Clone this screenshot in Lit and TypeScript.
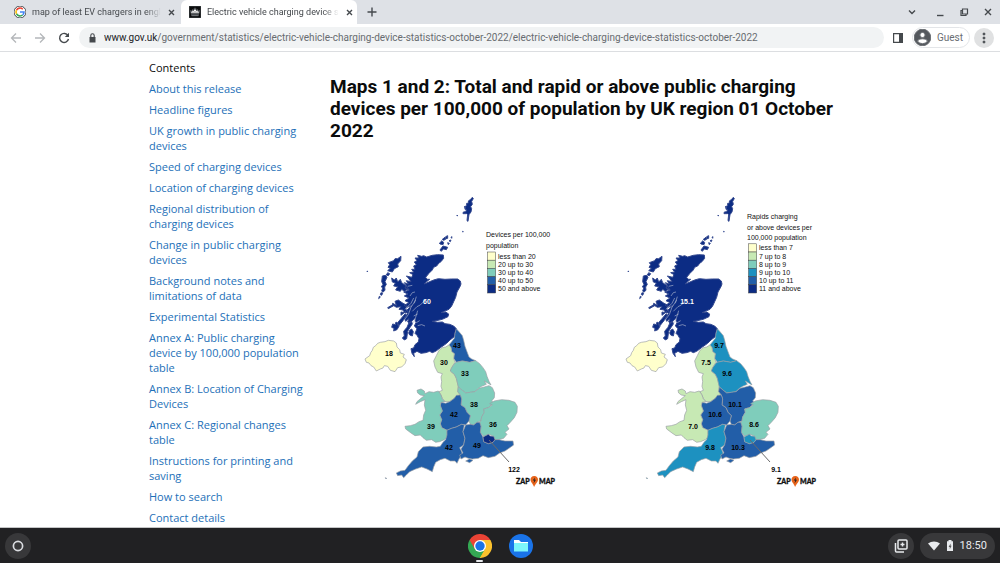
import { LitElement, html, svg, css } from "lit";
import { customElement, property } from "lit/decorators.js";

const COLORS = {
  cream: "#ffffcc",
  lime: "#c7e9b4",
  teal: "#7fcdbb",
  sky: "#1d91c0",
  blue: "#225ea8",
  navy: "#0c2c84",
};

type ColorName = keyof typeof COLORS;

interface MapData {
  title: string[];
  titleY: number;
  legend: [ColorName, string][];
  regions: Record<string, [ColorName, string, number, number]>;
}

// outlines, drawn on a grid three times as fine as the map
const SHAPES: Record<string, string> = {
  ni: "M30 507L44 497 47 488 52 481 55 472 62 467 68 460 76 457 90 455 100 451 116 453 124 459 126 471 134 479 136 489 148 493 144 501 154 509 150 521 140 531 128 533 120 545 106 541 98 529 88 527 84 534 76 537 64 543 56 531 48 527 42 519 34 517Z",
  ne: "M304 416L312 425 322 437 326 451 330 469 336 485 342 501 350 507 362 512 344 517 322 513 304 517 296 505 298 491 290 485 288 473 282 465 290 455 298 445 300 430Z",
  nw: "M282 465L288 473 290 485 298 491 296 505 300 517 290 533 286 543 298 553 304 565 310 589 308 605 316 615 298 625 284 635 270 635 262 625 258 615 252 605 262 601 258 589 260 575 258 561 262 551 248 547 240 531 236 513 244 497 252 481 262 473 272 471Z",
  yh: "M304 517L322 513 344 517 362 512 374 521 384 533 392 545 396 559 402 574 408 585 398 579 388 573 394 583 380 589 370 595 360 605 346 607 332 609 322 601 310 591 304 565 298 553 286 543 290 533 300 519Z",
  em: "M310 591L322 601 332 609 346 607 360 605 372 595 388 591 402 587 412 593 419 609 418 623 410 633 416 638 400 653 386 657 388 667 380 681 378 693 366 697 356 705 346 703 342 693 346 677 336 667 330 653 318 645 320 627 316 615 308 605Z",
  wm: "M316 615L320 627 318 645 330 653 336 667 346 677 342 693 332 705 320 703 304 711 290 715 276 721 260 713 256 701 260 689 254 675 262 663 256 647 258 637 272 640 284 635 298 625 304 616Z",
  ee: "M386 657L400 653 412 645 404 641 418 633 440 629 462 631 480 637 487 649 486 667 478 683 466 697 456 707 462 717 450 727 456 733 446 745 430 749 420 749 416 739 402 733 386 739 376 727 378 709 374 697 378 693 380 681 388 667Z",
  se: "M332 705L346 703 356 705 366 697 374 697 378 709 376 727 384 741 386 755 400 761 414 757 420 749 432 749 450 753 474 753 476 765 462 775 450 783 434 789 420 799 400 803 384 797 370 805 352 807 340 805 330 801 318 807 314 795 324 789 318 777 326 765 330 745 324 725ZM332 813L344 807 354 811 344 818Z",
  lon: "M384 741L392 737 400 733 406 738 416 739 420 749 414 757 400 761 386 755Z",
  sw: "M276 721L290 715 304 711 320 703 328 705 324 725 330 745 326 765 314 773 320 785 322 793 312 807 306 820 300 813 286 813 270 805 256 809 242 817 236 831 232 845 216 837 200 831 182 837 164 845 154 855 146 863 140 855 128 857 124 849 136 843 150 841 160 827 172 813 186 801 190 785 204 771 224 769 244 771 256 769 264 757 272 749 276 735ZM91 863l4 2-2 2z",
  wal: "M186 601L198 597 208 603 210 611 222 605 236 607 250 603 258 615 262 627 270 635 258 637 256 647 262 663 254 675 260 689 256 701 260 713 276 721 276 741 268 749 254 755 242 757 230 749 214 751 204 743 196 735 180 737 168 729 152 717 150 709 166 707 180 703 192 695 204 691 206 675 212 661 208 645 210 629 196 635 182 643 186 635 198 625 208 617 196 615 188 609Z",
  sco: `M188 196L200 199 206 197 215 201 232 196 248 194 265 195 266 205 258 215 252 219 245 228 236 232 232 240 222 250 212 262 217 268 224 268 216 274 208 282 222 276 236 270 250 266 270 268 290 267 308 267 316 273 318 282 315 290 306 306 302 322 296 335 290 348 282 358 268 364 258 368 272 366 281 372 279 380 262 388 240 393 232 394 248 397 262 396 270 401 284 403 296 408 304 416 300 428 298 440 285 450 275 460 258 472 242 484 232 488 224 484 212 488 198 490 186 484 176 490 178 500 171 490 168 476 176 474 180 464 190 456 192 446 186 436 180 430 186 416 178 408 183 398 180 385 172 392 165 400 158 396 162 386 152 394 148 384 158 370 150 366 160 356 172 346 156 352 148 346 162 338 150 332 162 324 148 318 158 312 146 306 163 300 150 294 154 286 148 278 160 282 154 272 168 275 160 264 154 258 170 262 174 254 164 248 176 246 170 238 180 238 176 228 184 224 178 216 186 212 180 204 192 204Z
    M110 264L118 270 124 264 128 276 136 268 140 278 150 285 160 296 148 304 140 298 136 304 122 300 128 290 116 288 121 279 112 276Z
    M138 199L137 212 128 222 130 230 118 236 112 246 98 242 106 235 99 232 104 224 100 218 116 212 120 206 128 206Z
    M98 248l6 3-4 6-6-2zM82 258l10-2 4 6-6 13 4 8-5 8 1 10-7 6-3-5 4-9-5-2 5-8-4-8zM78 308l5 2-3 6-4-2zM73 319l3 2-5 5z
    M113 340L124 346 120 334 130 330 144 340 156 346 152 358 160 364 150 370 144 360 132 358 138 350 124 352 112 344Z
    M98 353l14-8 6 1-18 10zM113 402l8 2 2-8 7 5 2 8-6 10-10 4 1-8-7-3zM128 398l10-12 12-14 4 4-10 16-12 15-5-2z
    M142 444L148 438 146 424 156 412 162 398 170 394 172 402 164 414 158 424 155 446 148 450ZM164 421l6-4 5 8-3 13-8-3-3-6z
    M138 366l10 2-10 8z
    M253 160l8-8 5 6-2 6-9-2zM262 148l8-6 2 6-6 3zM272 140l6-3 0 8-5 1zM282 152l6-2-2 5zM264 168l14 4-4 7-8-2-8 7-3-4zM278 158l5 2-3 4zM288 142l3-2-1 5z
    M352 22l3 4-5 8 2 9-5 7 3 6-2 10-6 8-3 20-3-2 2-18-3-3-11 0 1-5 8-1 1-6-5-2 3-4-5-2 8-4 0-7 6-1-1-6 7-5z
    M306 75l2 2-2 1zM323 124l2 1-2 1zM36 243l2 1-1 2z`,
};

const LOCHS =
  "M208 333L196 345 186 350 172 364M182 330L168 352 160 374 148 390M184 320L178 340M165 318L172 308 180 306M158 289L172 286M150 358L168 340 176 324M188 362L182 382 176 398M176 378L188 372M184 398L194 392M188 407L200 404 210 408";

const DEVICES: MapData = {
  title: ["Devices per 100,000", "population"],
  titleY: 47,
  legend: [
    ["cream", "less than 20"],
    ["lime", "20 up to 30"],
    ["teal", "30 up to 40"],
    ["blue", "40 up to 50"],
    ["navy", "50 and above"],
  ],
  regions: {
    sco: ["navy", "60", 72, 114],
    ni: ["cream", "18", 34, 166],
    ne: ["blue", "43", 102, 158],
    nw: ["lime", "30", 89, 175],
    yh: ["teal", "33", 110, 186],
    em: ["teal", "38", 119, 217],
    wm: ["blue", "42", 99, 227],
    ee: ["teal", "36", 138, 237],
    wal: ["teal", "39", 76, 239],
    sw: ["blue", "42", 94, 260],
    se: ["blue", "49", 122, 258],
    lon: ["navy", "122", 159, 282],
  },
};

const RAPIDS: MapData = {
  title: ["Rapids charging", "or above devices per", "100,000 population"],
  titleY: 29,
  legend: [
    ["cream", "less than 7"],
    ["lime", "7 up to 8"],
    ["teal", "8 up to 9"],
    ["sky", "9 up to 10"],
    ["blue", "10 up to 11"],
    ["navy", "11 and above"],
  ],
  regions: {
    sco: ["navy", "15.1", 71, 114],
    ni: ["cream", "1.2", 35, 166],
    ne: ["sky", "9.7", 103, 158],
    nw: ["lime", "7.5", 90, 175],
    yh: ["sky", "9.6", 111, 186],
    em: ["blue", "10.1", 119, 217],
    wm: ["blue", "10.6", 99, 227],
    ee: ["teal", "8.6", 138, 237],
    wal: ["lime", "7.0", 77, 239],
    sw: ["sky", "9.8", 94, 260],
    se: ["blue", "10.3", 122, 260],
    lon: ["sky", "9.1", 160, 282],
  },
};

@customElement("region-map")
export class RegionMap extends LitElement {
  @property({ attribute: false }) data: MapData = DEVICES;

  static styles = css`
    :host {
      display: block;
    }

    svg {
      display: block;
      width: 210px;
      height: 305px;
      font-family: "Liberation Sans", Arial, sans-serif;
      font-size: 7px;
    }

    .region {
      stroke: #9a9fa5;
      stroke-width: 2;
      stroke-linejoin: round;
    }

    .region.sco {
      stroke: #33488f;
      stroke-width: 3;
    }

    .lochs {
      fill: none;
      stroke: #a9b2cc;
      stroke-width: 2;
    }

    .callout {
      stroke: #6b6b6b;
      stroke-width: 1;
    }

    .value {
      font-weight: bold;
      text-anchor: middle;
      fill: #000;
    }

    .value.light {
      fill: #fff;
    }

    .key {
      fill: #111;
    }

    .swatch {
      stroke: #444;
      stroke-width: 0.5;
    }

    .brand {
      font-family: Lato, sans-serif;
      font-size: 7px;
      font-weight: 900;
      fill: #111;
      stroke: #111;
      stroke-width: 0.3;
    }
  `;

  render() {
    const { title, titleY, legend, regions } = this.data;
    const legendY = 103 - legend.length * 8.2;
    return html`
      <svg viewBox="0 0 210 305" role="img" aria-label=${title.join(" ")}>
        <g transform="scale(0.3333)">
          ${Object.entries(regions).map(
            ([id, [color]]) =>
              svg`<path class="region ${id}" d=${SHAPES[id]} fill=${COLORS[color]} />`
          )}
          <path class="lochs" d=${LOCHS} />
        </g>
        <line class="callout" x1="134" y1="250" x2="154" y2="272" />
        ${Object.entries(regions).map(
          ([id, [, label, x, y]]) =>
            svg`<text class="value ${id === "sco" ? "light" : ""}" x=${x} y=${y}>${label}</text>`
        )}
        ${title.map(
          (line, i) =>
            svg`<text class="key" x="131" y=${titleY + i * 10.5}>${line}</text>`
        )}
        ${legend.map(
          ([color, label], i) => svg`
            <rect class="swatch" x="132.5" y=${legendY + i * 8.2} width="8.2" height="8.2" fill=${COLORS[color]} />
            <text class="key" x="143" y=${legendY + i * 8.2 + 6.6}>${label}</text>`
        )}
        <text class="brand" x="161" y="294">ZAP</text>
        <path
          d="M179.300 286c-2.600 0-4 1.900-3.800 3.900.2 2.200 2.300 3.200 3.600 7.200 1.600-3.900 3.700-5 3.900-7.200.2-2.100-1.300-3.900-3.700-3.900z"
          fill="#e8641b"
        />
        <path d="M180 287.500l-2.300 3h1.500l-.7 3 2.500-3.700h-1.500z" fill="#222" />
        <text class="brand" x="184" y="294">MAP</text>
      </svg>
    `;
  }
}

@customElement("browser-header")
export class BrowserHeader extends LitElement {
  static styles = css`
    :host {
      display: block;
      font-family: Roboto, sans-serif;
      color: #45494d;
    }

    button {
      display: flex;
      align-items: center;
      justify-content: center;
      padding: 0;
      border: 0;
      background: none;
      color: inherit;
      font: inherit;
    }

    svg {
      display: block;
      flex: none;
      fill: none;
      stroke: currentColor;
    }

    .strip {
      display: flex;
      align-items: stretch;
      height: 24px;
      background: #dee1e6;
    }

    .tab {
      display: flex;
      align-items: center;
      gap: 6px;
      box-sizing: border-box;
      width: 176px;
      padding: 0 8px;
      font-size: 9px;
      line-height: 24px;
    }

    .tab:first-child {
      width: 181px;
      padding: 0 7px 0 14px;
    }

    .tab.active {
      background: #fff;
      border-radius: 6px 6px 0 0;
    }

    .tab span {
      flex: 1;
      white-space: nowrap;
      mask-image: linear-gradient(to right, #000 88%, transparent);
    }

    .new-tab {
      width: 30px;
    }

    .window-buttons {
      display: flex;
      align-items: center;
      gap: 12px;
      margin-left: auto;
      padding-right: 6px;
    }

    .window-buttons button:first-child {
      margin-right: 4px;
    }

    .toolbar {
      display: flex;
      align-items: center;
      box-sizing: border-box;
      height: 28px;
      padding: 0 6px 0 10px;
      background: #fff;
      border-bottom: 1px solid #dcdee1;
    }

    .nav {
      display: flex;
      gap: 12px;
      padding-right: 9px;
    }

    .nav .off {
      color: #b4b7ba;
    }

    .omnibox {
      display: flex;
      flex: 1;
      align-items: center;
      gap: 7px;
      min-width: 0;
      height: 21px;
      padding-left: 9px;
      border-radius: 11px;
      background: #f1f3f4;
    }

    .url {
      overflow: hidden;
      color: #686c70;
      font-size: 10px;
      line-height: 20px;
      white-space: nowrap;
    }

    .url b {
      color: #202124;
      font-weight: 400;
    }

    .side {
      width: 28px;
    }

    .guest {
      gap: 6px;
      height: 21px;
      padding: 0 6px 0 1px;
      border: 1px solid #e3e5e8;
      border-radius: 11px;
      box-sizing: border-box;
      color: #6a6e73;
      font-size: 10px;
    }

    .more {
      width: 20px;
      height: 20px;
      margin-left: 4px;
      border-radius: 50%;
      background: #e0e1e2;
    }
  `;

  closeIcon() {
    return html`<svg width="9" height="9" viewBox="0 0 9 9" stroke-width="1.4">
      <path d="M2 2l5 5M7 2l-5 5" />
    </svg>`;
  }

  render() {
    return html`
      <div class="strip">
        <div class="tab">
          <svg width="12" height="12" viewBox="0 0 12 12" stroke="none">
            <circle cx="6" cy="6" r="6" fill="#fff" />
            <g fill="none" stroke-width="1.600">
              <path d="M8.800 3.200A4 4 0 0 0 2.500 4.100" stroke="#ea4335" />
              <path d="M2.500 4.100a4 4 0 0 0 0 3.800" stroke="#fbbc05" />
              <path d="M2.500 7.900A4 4 0 0 0 8.600 9" stroke="#34a853" />
              <path d="M8.600 9A4 4 0 0 0 10 6H6" stroke="#4285f4" />
            </g>
          </svg>
          <span>map of least EV chargers in engl</span>
          <button aria-label="Close tab">${this.closeIcon()}</button>
        </div>
        <div class="tab active">
          <svg width="12" height="12" viewBox="0 0 12 12" stroke="none">
            <path d="M0 0h12v12H0z" fill="#0b0c0c" />
            <path
              d="M2.200 7.800L1.400 4.600l1.500.7L3.400 3.600l1.200.9.6-.7-.5-.9h.8V2h1v.9h.8l-.5.900.6.700 1.200-.9.500 1.700 1.500-.7-.8 3.200z"
              fill="#fff"
            />
            <path d="M2.600 8.500h6.800v1.300H2.600z" fill="#fff" />
            <path d="M4 5.500v2M6 5v2.500M8 5.500v2" stroke="#0b0c0c" stroke-width=".5" />
          </svg>
          <span>Electric vehicle charging device s</span>
          <button aria-label="Close tab">${this.closeIcon()}</button>
        </div>
        <button class="new-tab" aria-label="New tab">
          <svg width="10" height="10" viewBox="0 0 10 10" stroke-width="1.400">
            <path d="M5 .5v9M.5 5h9" />
          </svg>
        </button>
        <div class="window-buttons">
          <button aria-label="Search tabs">
            <svg width="12" height="12" viewBox="0 0 12 12" stroke-width="1.400">
              <path d="M3 4.500l3 3 3-3" />
            </svg>
          </button>
          <button aria-label="Minimize">
            <svg width="12" height="12" viewBox="0 0 12 12" stroke-width="1.400">
              <path d="M3 9.500h6.500" />
            </svg>
          </button>
          <button aria-label="Restore">
            <svg width="12" height="12" viewBox="0 0 12 12" stroke-width="1.200">
              <path d="M4.500 3h5v5h-5zM4.500 4.500H3v5h5V8" />
            </svg>
          </button>
          <button aria-label="Close window">
            <svg width="12" height="12" viewBox="0 0 12 12" stroke-width="1.400">
              <path d="M3 3l6 6M9 3l-6 6" />
            </svg>
          </button>
        </div>
      </div>
      <div class="toolbar">
        <div class="nav">
          <button class="off" aria-label="Back">
            <svg width="12" height="12" viewBox="0 0 12 12" stroke-width="1.300">
              <path d="M11 6H1.500M6 1.500L1.500 6 6 10.500" />
            </svg>
          </button>
          <button class="off" aria-label="Forward">
            <svg width="12" height="12" viewBox="0 0 12 12" stroke-width="1.300">
              <path d="M1 6h9.500M6 1.500L10.500 6 6 10.500" />
            </svg>
          </button>
          <button aria-label="Reload">
            <svg width="12" height="12" viewBox="0 0 12 12" stroke-width="1.400">
              <path d="M10 3.600A4.500 4.500 0 1 0 10.500 7" />
              <path d="M11 .8v4.200H6.800z" fill="currentColor" stroke="none" />
            </svg>
          </button>
        </div>
        <div class="omnibox">
          <svg width="9" height="10" viewBox="0 0 9 10" stroke-width="1.100">
            <path d="M1.500 4h6v5.500h-6z" fill="currentColor" stroke="none" />
            <path d="M2.800 4.200V2.500a1.700 1.700 0 0 1 3.400 0v1.700" />
          </svg>
          <div class="url"><b>www.gov.uk</b>/government/statistics/electric-vehicle-charging-device-statistics-october-2022/electric-vehicle-charging-device-statistics-october-2022</div>
        </div>
        <button class="side" aria-label="Side panel">
          <svg width="10" height="10" viewBox="0 0 10 10" stroke-width="1.200">
            <path d="M.6.6h8.800v8.800H.6z" />
            <path d="M6 .6h3.400v8.800H6z" fill="currentColor" stroke="none" />
          </svg>
        </button>
        <button class="guest">
          <svg width="17" height="17" viewBox="0 0 17 17" stroke="none">
            <circle cx="8.500" cy="8.500" r="8.300" fill="#54585d" />
            <circle cx="8.500" cy="6" r="2.600" fill="#fff" />
            <path d="M3.500 12.200c1-3.200 9-3.200 10 0a6.300 6.300 0 0 1-10 0z" fill="#fff" />
          </svg>
          Guest
        </button>
        <button class="more" aria-label="Menu">
          <svg width="4" height="12" viewBox="0 0 4 12" stroke="none">
            <circle cx="2" cy="2" r="1" fill="#54585d" />
            <circle cx="2" cy="6" r="1" fill="#54585d" />
            <circle cx="2" cy="10" r="1" fill="#54585d" />
          </svg>
        </button>
      </div>
    `;
  }
}

@customElement("system-shelf")
export class SystemShelf extends LitElement {
  static styles = css`
    :host {
      display: grid;
      grid-template-columns: 1fr auto 1fr;
      align-items: center;
      box-sizing: border-box;
      height: 36px;
      padding: 0 5px;
      border-top: 1px solid #c4c5c6;
      background: #212123;
      color: #e8eaed;
      font-family: Roboto, sans-serif;
    }

    button {
      display: flex;
      align-items: center;
      justify-content: center;
      height: 26px;
      min-width: 26px;
      padding: 0;
      border: 0;
      border-radius: 13px;
      background: #38383a;
      color: inherit;
      font: inherit;
    }

    svg {
      display: block;
    }

    .apps {
      display: flex;
      gap: 15px;
    }

    .apps button {
      position: relative;
      background: none;
    }

    .running::after {
      position: absolute;
      bottom: -3px;
      width: 7px;
      height: 2px;
      border-radius: 1px;
      background: #e8eaed;
      content: "";
    }

    .tray {
      display: flex;
      justify-content: flex-end;
      gap: 6px;
    }

    .status {
      gap: 6px;
      padding: 0 8px;
      font-size: 11px;
    }
  `;

  render() {
    return html`
      <div>
        <button aria-label="Launcher">
          <svg width="12" height="12" viewBox="0 0 12 12">
            <circle cx="6" cy="6" r="4.600" fill="none" stroke="#dadce0" stroke-width="1.700" />
          </svg>
        </button>
      </div>
      <div class="apps">
        <button class="running" aria-label="Chrome">
          <svg width="24" height="24" viewBox="0 0 24 24">
            <path d="M12 12L1.600 6a12 12 0 0 1 20.800 0z" fill="#ea4335" />
            <path d="M12 12L22.400 6A12 12 0 0 1 12 24z" fill="#fbc12d" />
            <path d="M12 12v12A12 12 0 0 1 1.600 6z" fill="#34a853" />
            <path d="M12 6h10.400L12 24l5.200-9z" fill="#fbc12d" />
            <path d="M1.600 6L6.800 15 12 12V6z" fill="#ea4335" />
            <path d="M6.800 15L12 24l5.200-9z" fill="#34a853" />
            <path d="M17.200 15L12 24h1l9.400-18H12z" fill="#fbc12d" />
            <circle cx="12" cy="12" r="6" fill="#fff" />
            <circle cx="12" cy="12" r="4.700" fill="#1a73e8" />
          </svg>
        </button>
        <button aria-label="Files">
          <svg width="24" height="24" viewBox="0 0 24 24">
            <circle cx="12" cy="12" r="12" fill="#1a73e8" />
            <path d="M5 6h5l2 2h7v4H5z" fill="#fff" />
            <path d="M5 9h14v8.500H5z" fill="#7df6fb" />
          </svg>
        </button>
      </div>
      <div class="tray">
        <button aria-label="Holding space">
          <svg width="14" height="14" viewBox="0 0 14 14" fill="none" stroke="currentColor" stroke-width="1.500">
            <rect x="4" y="1" width="9" height="9" rx="1" />
            <path d="M1.500 4v8a1 1 0 0 0 1 1H10M8.500 3.500v4M6.500 5.500h4" />
          </svg>
        </button>
        <button class="status">
          <svg width="12" height="10" viewBox="0 0 12 10" fill="currentColor">
            <path d="M6 9.500L0 2.500C3.500-.2 8.500-.2 12 2.500z" />
          </svg>
          <svg width="8" height="11" viewBox="0 0 8 11">
            <path d="M2.500 0h3v1.300H7V11H1V1.300h1.500z" fill="#e8eaed" />
            <path d="M4.600 3.500L2.600 7h1.200v2.200L5.600 5.800H4.600z" fill="#555" />
          </svg>
          18:50
        </button>
      </div>
    `;
  }
}

@customElement("app-root")
export class AppRoot extends LitElement {
  static styles = css`
    :host {
      display: flex;
      flex-direction: column;
      height: 100vh;
      background: #fff;
      color: #0b0c0c;
      font-family: "Open Sans", "Noto Sans", sans-serif;
    }

    .page {
      flex: 1;
      min-height: 0;
      overflow: hidden;
    }

    .columns {
      display: grid;
      grid-template-columns: 160px 1fr;
      gap: 21px;
      max-width: 702px;
      margin: 0 auto;
    }

    nav {
      padding-top: 8px;
      font-size: 11px;
      line-height: 15px;
    }

    h2 {
      margin: 0 0 6px;
      font-size: 11px;
      font-weight: 400;
      line-height: 15px;
    }

    ul {
      display: flex;
      flex-direction: column;
      gap: 6px;
      margin: 0;
      padding: 0 4px 0 0;
      list-style: none;
    }

    a {
      color: #1d70b8;
      text-decoration: none;
    }

    h3 {
      margin: 24px 0 48px;
      font-family: Roboto, sans-serif;
      font-size: 19px;
      font-weight: 700;
      line-height: 22px;
    }

    .maps {
      display: flex;
      justify-content: space-between;
      padding: 0 25px;
    }
  `;

  links = [
    "About this release",
    "Headline figures",
    "UK growth in public charging devices",
    "Speed of charging devices",
    "Location of charging devices",
    "Regional distribution of charging devices",
    "Change in public charging devices",
    "Background notes and limitations of data",
    "Experimental Statistics",
    "Annex A: Public charging device by 100,000 population table",
    "Annex B: Location of Charging Devices",
    "Annex C: Regional changes table",
    "Instructions for printing and saving",
    "How to search",
    "Contact details",
  ];

  render() {
    return html`
      <browser-header></browser-header>
      <div class="page">
        <div class="columns">
          <nav aria-labelledby="contents">
            <h2 id="contents">Contents</h2>
            <ul>
              ${this.links.map((text) => html`<li><a href="#">${text}</a></li>`)}
            </ul>
          </nav>
          <main>
            <h3>
              Maps 1 and 2: Total and rapid or above public charging devices per
              100,000 of population by UK region 01 October 2022
            </h3>
            <div class="maps">
              <region-map .data=${DEVICES}></region-map>
              <region-map .data=${RAPIDS}></region-map>
            </div>
          </main>
        </div>
      </div>
      <system-shelf></system-shelf>
    `;
  }
}
